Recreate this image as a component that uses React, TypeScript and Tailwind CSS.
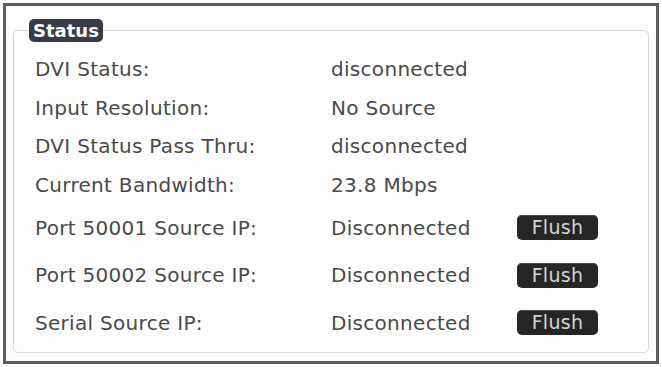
import React from 'react';

const rows = [
  { label: 'DVI Status:', value: 'disconnected' },
  { label: 'Input Resolution:', value: 'No Source' },
  { label: 'DVI Status Pass Thru:', value: 'disconnected' },
  { label: 'Current Bandwidth:', value: '23.8 Mbps' },
  { label: 'Port 50001 Source IP:', value: 'Disconnected', flush: true },
  { label: 'Port 50002 Source IP:', value: 'Disconnected', flush: true },
  { label: 'Serial Source IP:', value: 'Disconnected', flush: true },
];

const App: React.FC = () => {
  return (
    <div className="w-[662px] h-[367px] bg-white p-[3px] font-['DejaVu_Sans',sans-serif]">
      <div className="h-full border-[3px] border-[#5c5c5c] bg-[#fdfdfd] px-[7px] pb-[8px] pt-[13px]">
        <fieldset className="h-full rounded-[5px] border border-[#d9d9d9] pl-[21px] pr-4 pt-[8px]">
          <legend className="-ml-[6px] rounded-[5px] bg-[#373c48] px-[4px] text-[18px] font-bold leading-[23px] text-white">
            Status
          </legend>
          {rows.map((r) => (
            <div
              key={r.label}
              className={`flex items-center text-[20px] tracking-[0.3px] text-[#4a4a4a] ${r.flush ? 'h-[47.5px]' : 'h-[38.5px]'}`}
            >
              <span className="w-[296px]">{r.label}</span>
              <span className="w-[186px]">{r.value}</span>
              {r.flush && (
                <button className="h-[25px] w-[81px] rounded-[5px] bg-[#262626] text-[19px] leading-none text-[#d4d4d4] shadow-[inset_0_1px_0_#4a4a4a]">
                  Flush
                </button>
              )}
            </div>
          ))}
        </fieldset>
      </div>
    </div>
  );
};

export default App;
